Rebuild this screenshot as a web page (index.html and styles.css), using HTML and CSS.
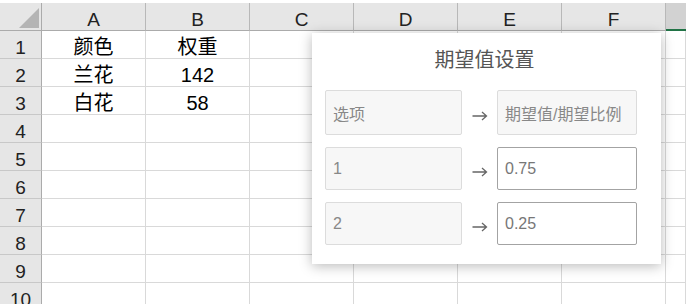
FILE: index.html
```html
<!DOCTYPE html>
<html lang="zh-CN">

<head>
    <meta charset="UTF-8">
    <meta name="viewport" content="width=device-width, initial-scale=1.0">
    <title>期望值设置</title>
    <link rel="stylesheet" href="styles.css">
</head>

<body>

    <!-- Worksheet grid -->
    <div class="sheet">
        <div class="corner"><span class="corner-mark"></span></div>
        <div class="col-head">A</div>
        <div class="col-head">B</div>
        <div class="col-head">C</div>
        <div class="col-head">D</div>
        <div class="col-head">E</div>
        <div class="col-head">F</div>
        <div class="col-head selected"></div>

        <div class="row-head">1</div>
        <div class="cell">颜色</div>
        <div class="cell">权重</div>
        <div class="cell"></div><div class="cell"></div><div class="cell"></div><div class="cell"></div><div class="cell"></div>

        <div class="row-head">2</div>
        <div class="cell">兰花</div>
        <div class="cell">142</div>
        <div class="cell"></div><div class="cell"></div><div class="cell"></div><div class="cell"></div><div class="cell"></div>

        <div class="row-head">3</div>
        <div class="cell">白花</div>
        <div class="cell">58</div>
        <div class="cell"></div><div class="cell"></div><div class="cell"></div><div class="cell"></div><div class="cell"></div>

        <div class="row-head">4</div>
        <div class="cell"></div><div class="cell"></div><div class="cell"></div><div class="cell"></div><div class="cell"></div><div class="cell"></div><div class="cell"></div>

        <div class="row-head">5</div>
        <div class="cell"></div><div class="cell"></div><div class="cell"></div><div class="cell"></div><div class="cell"></div><div class="cell"></div><div class="cell"></div>

        <div class="row-head">6</div>
        <div class="cell"></div><div class="cell"></div><div class="cell"></div><div class="cell"></div><div class="cell"></div><div class="cell"></div><div class="cell"></div>

        <div class="row-head">7</div>
        <div class="cell"></div><div class="cell"></div><div class="cell"></div><div class="cell"></div><div class="cell"></div><div class="cell"></div><div class="cell"></div>

        <div class="row-head">8</div>
        <div class="cell"></div><div class="cell"></div><div class="cell"></div><div class="cell"></div><div class="cell"></div><div class="cell"></div><div class="cell"></div>

        <div class="row-head">9</div>
        <div class="cell"></div><div class="cell"></div><div class="cell"></div><div class="cell"></div><div class="cell"></div><div class="cell"></div><div class="cell"></div>

        <div class="row-head">10</div>
        <div class="cell"></div><div class="cell"></div><div class="cell"></div><div class="cell"></div><div class="cell"></div><div class="cell"></div><div class="cell"></div>
    </div>

    <!-- Expected value dialog -->
    <div class="dialog">
        <div class="dialog-title">期望值设置</div>
        <div class="map-list">
            <div class="map-row head">
                <div class="box muted">选项</div>
                <svg class="arrow" width="16" height="10" viewBox="0 0 16 10">
                    <path d="M1 5H15M10.5 1L15 5L10.5 9" fill="none" stroke="#666" stroke-width="1.3"/>
                </svg>
                <div class="box muted">期望值/期望比例</div>
            </div>
            <div class="map-row">
                <div class="box muted">1</div>
                <svg class="arrow" width="16" height="10" viewBox="0 0 16 10">
                    <path d="M1 5H15M10.5 1L15 5L10.5 9" fill="none" stroke="#666" stroke-width="1.3"/>
                </svg>
                <input class="box value" type="text" value="0.75">
            </div>
            <div class="map-row">
                <div class="box muted">2</div>
                <svg class="arrow" width="16" height="10" viewBox="0 0 16 10">
                    <path d="M1 5H15M10.5 1L15 5L10.5 9" fill="none" stroke="#666" stroke-width="1.3"/>
                </svg>
                <input class="box value" type="text" value="0.25">
            </div>
        </div>
    </div>

</body>

</html>
```

FILE: styles.css
```css
/* Sheet colours */
:root {
    --head-bg: #e6e6e6;
    --head-line: #ababab;
    --head-sep: #c8c8c8;
    --grid-line: #d9d9d9;
    --excel-green: #217346;
    --text-color: #000;
}

body {
    margin: 0;
    padding-top: 3px;
    height: 304px;
    box-sizing: border-box;
    overflow: hidden;
    background: #fff;
    font-family: "Liberation Sans", "Noto Sans CJK SC", sans-serif;
    color: var(--text-color);
    position: relative;
}

.sheet {
    display: grid;
    grid-template-columns: 42px repeat(6, 104px) 1fr;
    grid-auto-rows: 28px;
}

.sheet > div {
    box-sizing: border-box;
    border-right: 1px solid var(--grid-line);
    border-bottom: 1px solid var(--grid-line);
    font-size: 20px;
    line-height: 21px;
    padding-top: 6px;
    text-align: center;
    overflow: hidden;
    white-space: nowrap;
}

.sheet > .corner {
    background: var(--head-bg);
    border-right-color: var(--head-line);
    border-bottom-color: var(--head-line);
    padding: 0 2px 2px 0;
    display: flex;
    align-items: flex-end;
    justify-content: flex-end;
}

.corner-mark {
    width: 0;
    height: 0;
    border-left: 20px solid transparent;
    border-bottom: 20px solid #b4b4b4;
}

.sheet > .col-head {
    background: var(--head-bg);
    border-right-color: #b8b8b8;
    border-bottom-color: var(--head-line);
    font-size: 19px;
    padding-top: 7px;
    line-height: 20px;
    color: #222;
}

.sheet > .col-head.selected {
    background: #d2d2d2;
    border-right: none;
    border-bottom: 2px solid var(--excel-green);
}

.sheet > .row-head {
    background: var(--head-bg);
    border-right-color: var(--head-line);
    border-bottom-color: var(--head-sep);
    font-size: 19px;
    color: #222;
}

/* Dialog floating over the sheet */
.dialog {
    position: absolute;
    left: 312px;
    top: 33px;
    width: 349px;
    height: 231px;
    box-sizing: border-box;
    padding: 13px 24px 0 13px;
    background: #fff;
    box-shadow: 0 2px 12px rgba(0, 0, 0, 0.28);
    font-family: "Liberation Sans", "Noto Sans CJK SC", sans-serif;
}

.dialog-title {
    font-family: "Noto Sans CJK SC", sans-serif;
    font-size: 20px;
    line-height: 26px;
    text-align: center;
    padding-left: 7px;
    color: #555;
    margin-bottom: 18px;
}

.map-list {
    display: flex;
    flex-direction: column;
    gap: 12px;
}

.map-row {
    display: flex;
    align-items: center;
    height: 43px;
}

.map-row.head {
    height: 45px;
}

.arrow {
    width: 35px;
    margin-top: 6px;
    flex: none;
}

.box {
    box-sizing: border-box;
    height: 100%;
    margin: 0;
    padding: 0 7px;
    border-radius: 2px;
    font-family: "Liberation Sans", "Noto Sans CJK SC", sans-serif;
    font-size: 16px;
    display: flex;
    align-items: center;
    outline: none;
}

.box.muted {
    width: 137px;
    background: #f7f7f7;
    border: 1px solid #dcdcdc;
    color: #888;
}

.map-row .box.muted:last-child {
    width: 140px;
}

.box.value {
    width: 140px;
    background: #fff;
    border: 1px solid #a3a3a3;
    color: #777;
}
```
